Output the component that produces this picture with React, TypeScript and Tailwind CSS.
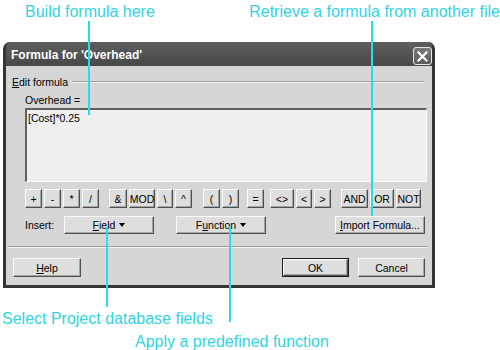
import React from "react";

function Btn({
  className = "",
  children,
}: {
  className?: string;
  children?: React.ReactNode;
}) {
  return (
    <div
      className={`flex items-center justify-center bg-[#dedede] text-black border border-t-[#fbfbfb] border-l-[#fbfbfb] border-r-[#4f4f4f] border-b-[#4f4f4f] shadow-[inset_-1px_-1px_0_#a5a5a5] whitespace-nowrap ${className}`}
    >
      {children}
    </div>
  );
}

function Arrow() {
  return (
    <span className="inline-block ml-[4px] w-0 h-0 border-x-[3.5px] border-x-transparent border-t-[4px] border-t-black align-middle" />
  );
}

function U({ children }: { children: React.ReactNode }) {
  return <span className="underline underline-offset-[1px]">{children}</span>;
}

export default function App() {
  return (
    <div className="relative w-[500px] h-[350px] bg-white overflow-hidden font-['Liberation_Sans',Arial,sans-serif]">
      {/* top callouts */}
      <div className="flex h-[42px] pt-[3px] text-[16px] leading-[18px] text-[#2fd4e4] whitespace-nowrap">
        <div className="ml-[25px] w-[226px]">Build formula here</div>
        <div>Retrieve a formula from another file</div>
      </div>

      {/* dialog */}
      <div className="ml-[3px] w-[432px] h-[246px] flex flex-col rounded-t-[7px] border-x-[3px] border-b-[3px] border-[#363636] bg-[#4d4d4d] overflow-hidden">
        <div className="h-[24px] flex items-start justify-between bg-linear-to-b from-[#5f5f5f] to-[#474747]">
          <div className="pl-[5px] pt-[6px] text-white font-bold text-[12px] leading-[14px]">
            Formula for 'Overhead'
          </div>
          <div className="mt-[5px] w-[19px] h-[18px] rounded-[3px] border border-[#e6e6e6] bg-linear-to-b from-[#7a7a7a] to-[#5a5a5a] flex items-center justify-center">
            <svg width="11" height="11" viewBox="0 0 11 11">
              <path d="M1.5 1.5 L9.5 9.5 M9.5 1.5 L1.5 9.5" stroke="white" strokeWidth="2.2" strokeLinecap="square" />
            </svg>
          </div>
        </div>

        <div className="flex-1 bg-[#d6d6d6] flex flex-col text-[10.5px] leading-[12px] text-black">
          {/* group header */}
          <div className="mt-[10px] pl-[6px] pr-[8px] flex items-center h-[12px]">
            <span>
              <U>E</U>dit formula
            </span>
            <div className="flex-1 ml-[4px] flex flex-col">
              <div className="h-[1px] bg-[#9c9c9c]" />
              <div className="h-[1px] bg-[#f4f4f4]" />
            </div>
          </div>

          <div className="mt-[6px] pl-[19px] h-[12px]">Overhead =</div>

          <div className="mt-[2px] ml-[19px] mr-[5px] h-[74px] bg-[#efefef] border-t-2 border-l-2 border-t-[#606060] border-l-[#606060] border-r border-b border-r-[#fafafa] border-b-[#fafafa] pl-[1px] pt-[2px]">
            [Cost]*0.25
          </div>

          {/* operator row */}
          <div className="mt-[7px] ml-[19px] flex h-[19px]">
            <Btn className="w-[17px]">+</Btn>
            <Btn className="ml-[2px] w-[17px]">-</Btn>
            <Btn className="ml-[2px] w-[17px]">*</Btn>
            <Btn className="ml-[2px] w-[17px]">/</Btn>
            <Btn className="ml-[10px] w-[18px]">&amp;</Btn>
            <Btn className="ml-[2px] w-[26px]">MOD</Btn>
            <Btn className="ml-[2px] w-[16px]">\</Btn>
            <Btn className="ml-[2px] w-[17px]">^</Btn>
            <Btn className="ml-[11px] w-[17px]">(</Btn>
            <Btn className="ml-[2px] w-[17px]">)</Btn>
            <Btn className="ml-[8px] w-[17px]">=</Btn>
            <Btn className="ml-[6px] w-[24px]">&lt;&gt;</Btn>
            <Btn className="ml-[2px] w-[16px]">&lt;</Btn>
            <Btn className="ml-[2px] w-[17px]">&gt;</Btn>
            <Btn className="ml-[10px] w-[27px]">AND</Btn>
            <Btn className="ml-[2px] w-[24px]">OR</Btn>
            <Btn className="ml-[2px] w-[25px]">NOT</Btn>
          </div>

          {/* insert row */}
          <div className="mt-[8px] ml-[19px] mr-[7px] flex items-center h-[18px]">
            <div className="w-[39px]">Insert:</div>
            <Btn className="w-[90px] h-[18px]">
              <U>F</U>ield
              <Arrow />
            </Btn>
            <Btn className="ml-[22px] w-[90px] h-[18px]">
              F<U>u</U>nction
              <Arrow />
            </Btn>
            <Btn className="ml-auto w-[90px] h-[18px]">
              <U>I</U>mport Formula...
            </Btn>
          </div>

          {/* separator */}
          <div className="mt-[12px] ml-[2px] mr-[4px] flex flex-col">
            <div className="h-[1px] bg-[#9c9c9c]" />
            <div className="h-[1px] bg-[#f4f4f4]" />
          </div>

          {/* bottom buttons */}
          <div className="mt-[10px] ml-[7px] mr-[7px] flex h-[19px]">
            <Btn className="w-[68px]">
              <U>H</U>elp
            </Btn>
            <div className="ml-auto w-[67px] border border-[#1e1e1e] flex">
              <Btn className="flex-1">OK</Btn>
            </div>
            <Btn className="ml-[9px] w-[67px]">Cancel</Btn>
          </div>
        </div>
      </div>

      {/* bottom callouts */}
      <div className="h-[62px] text-[16px] leading-[18px] text-[#2fd4e4] whitespace-nowrap">
        <div className="pl-[2px] pt-[22px]">Select Project database fields</div>
        <div className="pl-[135px] pt-[5px]">Apply a predefined function</div>
      </div>

      {/* callout lines */}
      <div className="absolute left-[88px] top-[21px] w-[2px] h-[94px] bg-[#22e0ea]" />
      <div className="absolute left-[371px] top-[21px] w-[2px] h-[195px] bg-[#22e0ea]" />
      <div className="absolute left-[106px] top-[227px] w-[2px] h-[80px] bg-[#22e0ea]" />
      <div className="absolute left-[229px] top-[226px] w-[2px] h-[96px] bg-[#22e0ea]" />
    </div>
  );
}
